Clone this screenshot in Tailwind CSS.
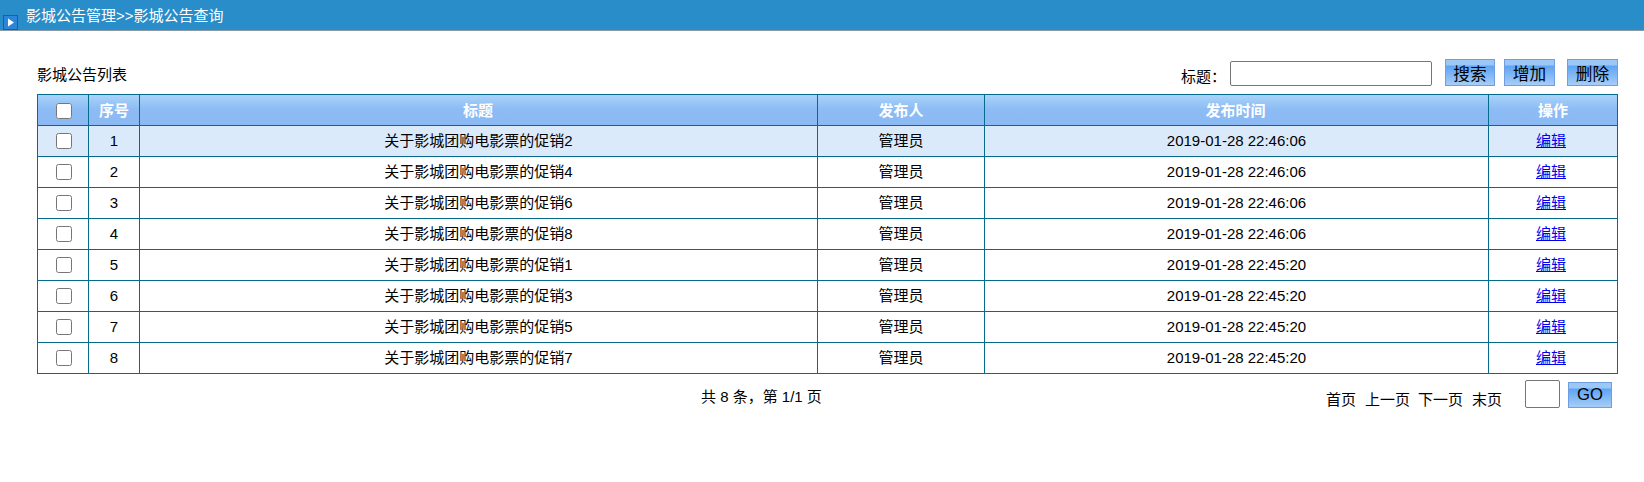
<!DOCTYPE html>
<html lang="zh-CN">
<head>
  <meta charset="UTF-8" />
  <title>影城公告查询</title>
  <script src="https://cdn.jsdelivr.net/npm/@tailwindcss/browser@4"></script>
</head>
<body class="bg-white text-[15px] leading-[17px] text-black font-['Liberation_Sans','Noto_Sans_CJK_SC',sans-serif]">

  <div class="h-[31px] bg-[#288dc9] border-b border-[#8a9aa5] flex relative">
    <svg class="absolute left-[3px] top-[15px]" width="15" height="15" viewBox="0 0 15 15">
      <rect x="0.5" y="0.5" width="14" height="14" fill="#2b86d8" stroke="#0f5fc0"/>
      <path d="M5 3.5 L11 7.5 L5 11.5 Z" fill="#ffffff"/>
    </svg>
    <span class="ml-[26px] mt-[7px] text-white">影城公告管理&gt;&gt;影城公告查询</span>
  </div>

  <div class="pl-[37px] pr-[26px]">
    <div class="h-[63px] flex">
      <span class="mt-[35px]">影城公告列表</span>
      <div class="ml-auto flex items-start pt-[28px]">
        <span class="mt-[9px]">标题：</span>
        <input type="text" class="ml-[4px] mt-[2px] w-[202px] h-[25px] border border-[#767676] rounded-[2px] bg-white" />
        <button class="ml-[13px] w-[50px] h-[27px] pt-[3px] text-[16.67px] border border-[#6f9fe0] bg-[linear-gradient(#9cc8f8_0,#9cc8f8_5px,#5ea4f3_6px,#a6cdf8_100%)]">搜索</button>
        <button class="ml-[9px] w-[51px] h-[27px] pt-[3px] text-[16.67px] border border-[#6f9fe0] bg-[linear-gradient(#9cc8f8_0,#9cc8f8_5px,#5ea4f3_6px,#a6cdf8_100%)]">增加</button>
        <button class="ml-[12px] w-[51px] h-[27px] pt-[3px] text-[16.67px] border border-[#6f9fe0] bg-[linear-gradient(#9cc8f8_0,#9cc8f8_5px,#5ea4f3_6px,#a6cdf8_100%)]">删除</button>
      </div>
    </div>

    <table class="w-[1581px] table-fixed border-collapse text-center">
      <thead>
        <tr class="h-[31px] text-white font-bold bg-[linear-gradient(#a9d3f9_0,#8dbcf5_45%,#8bb9f3_100%)]">
          <th class="w-[51px] pl-[2px] border border-[#066a8c]"><input type="checkbox" class="align-middle w-[16px] h-[16px]" /></th>
          <th class="w-[51px] border border-[#066a8c]">序号</th>
          <th class="w-[678px] pr-[1px] border border-[#066a8c]">标题</th>
          <th class="w-[167px] border border-[#066a8c]">发布人</th>
          <th class="w-[504px] pr-[2px] border border-[#066a8c]">发布时间</th>
          <th class="border border-[#066a8c]">操作</th>
        </tr>
      </thead>
      <tbody id="rows"></tbody>
    </table>

    <div class="relative h-[50px]">
      <span class="absolute left-[664px] top-[14px] whitespace-pre">共 8 条，第 1/1 页</span>
      <div class="absolute right-[6px] top-[6px] flex items-start">
        <span class="mt-[11px]">首页</span>
        <span class="ml-[9px] mt-[11px]">上一页</span>
        <span class="ml-[8px] mt-[11px]">下一页</span>
        <span class="ml-[9px] mt-[11px]">末页</span>
        <input type="text" class="ml-[23px] w-[35px] h-[28px] border border-[#767676] rounded-[2px] bg-white" />
        <button class="ml-[8px] mt-[2px] w-[44px] h-[26px] pb-[2px] text-[16.67px] border border-[#6f9fe0] bg-[linear-gradient(#9cc8f8_0,#9cc8f8_5px,#5ea4f3_6px,#a6cdf8_100%)]">GO</button>
      </div>
    </div>
  </div>

  <script>
    const notices = [
      ['关于影城团购电影票的促销2', '2019-01-28 22:46:06'],
      ['关于影城团购电影票的促销4', '2019-01-28 22:46:06'],
      ['关于影城团购电影票的促销6', '2019-01-28 22:46:06'],
      ['关于影城团购电影票的促销8', '2019-01-28 22:46:06'],
      ['关于影城团购电影票的促销1', '2019-01-28 22:45:20'],
      ['关于影城团购电影票的促销3', '2019-01-28 22:45:20'],
      ['关于影城团购电影票的促销5', '2019-01-28 22:45:20'],
      ['关于影城团购电影票的促销7', '2019-01-28 22:45:20'],
    ];
    const cell = 'border border-[#066a8c] pb-[2px]';
    document.getElementById('rows').innerHTML = notices.map((n, i) => `
      <tr class="h-[31px] ${i === 0 ? 'bg-[#dbeafb]' : 'bg-white'}">
        <td class="${cell} pl-[2px]"><input type="checkbox" class="align-middle w-[16px] h-[16px]" /></td>
        <td class="${cell}">${i + 1}</td>
        <td class="${cell}">${n[0]}</td>
        <td class="${cell}">管理员</td>
        <td class="${cell}">${n[1]}</td>
        <td class="${cell} pr-[4px]"><a href="#" class="text-[#0000ee] underline">编辑</a></td>
      </tr>`).join('');
  </script>
</body>
</html>
